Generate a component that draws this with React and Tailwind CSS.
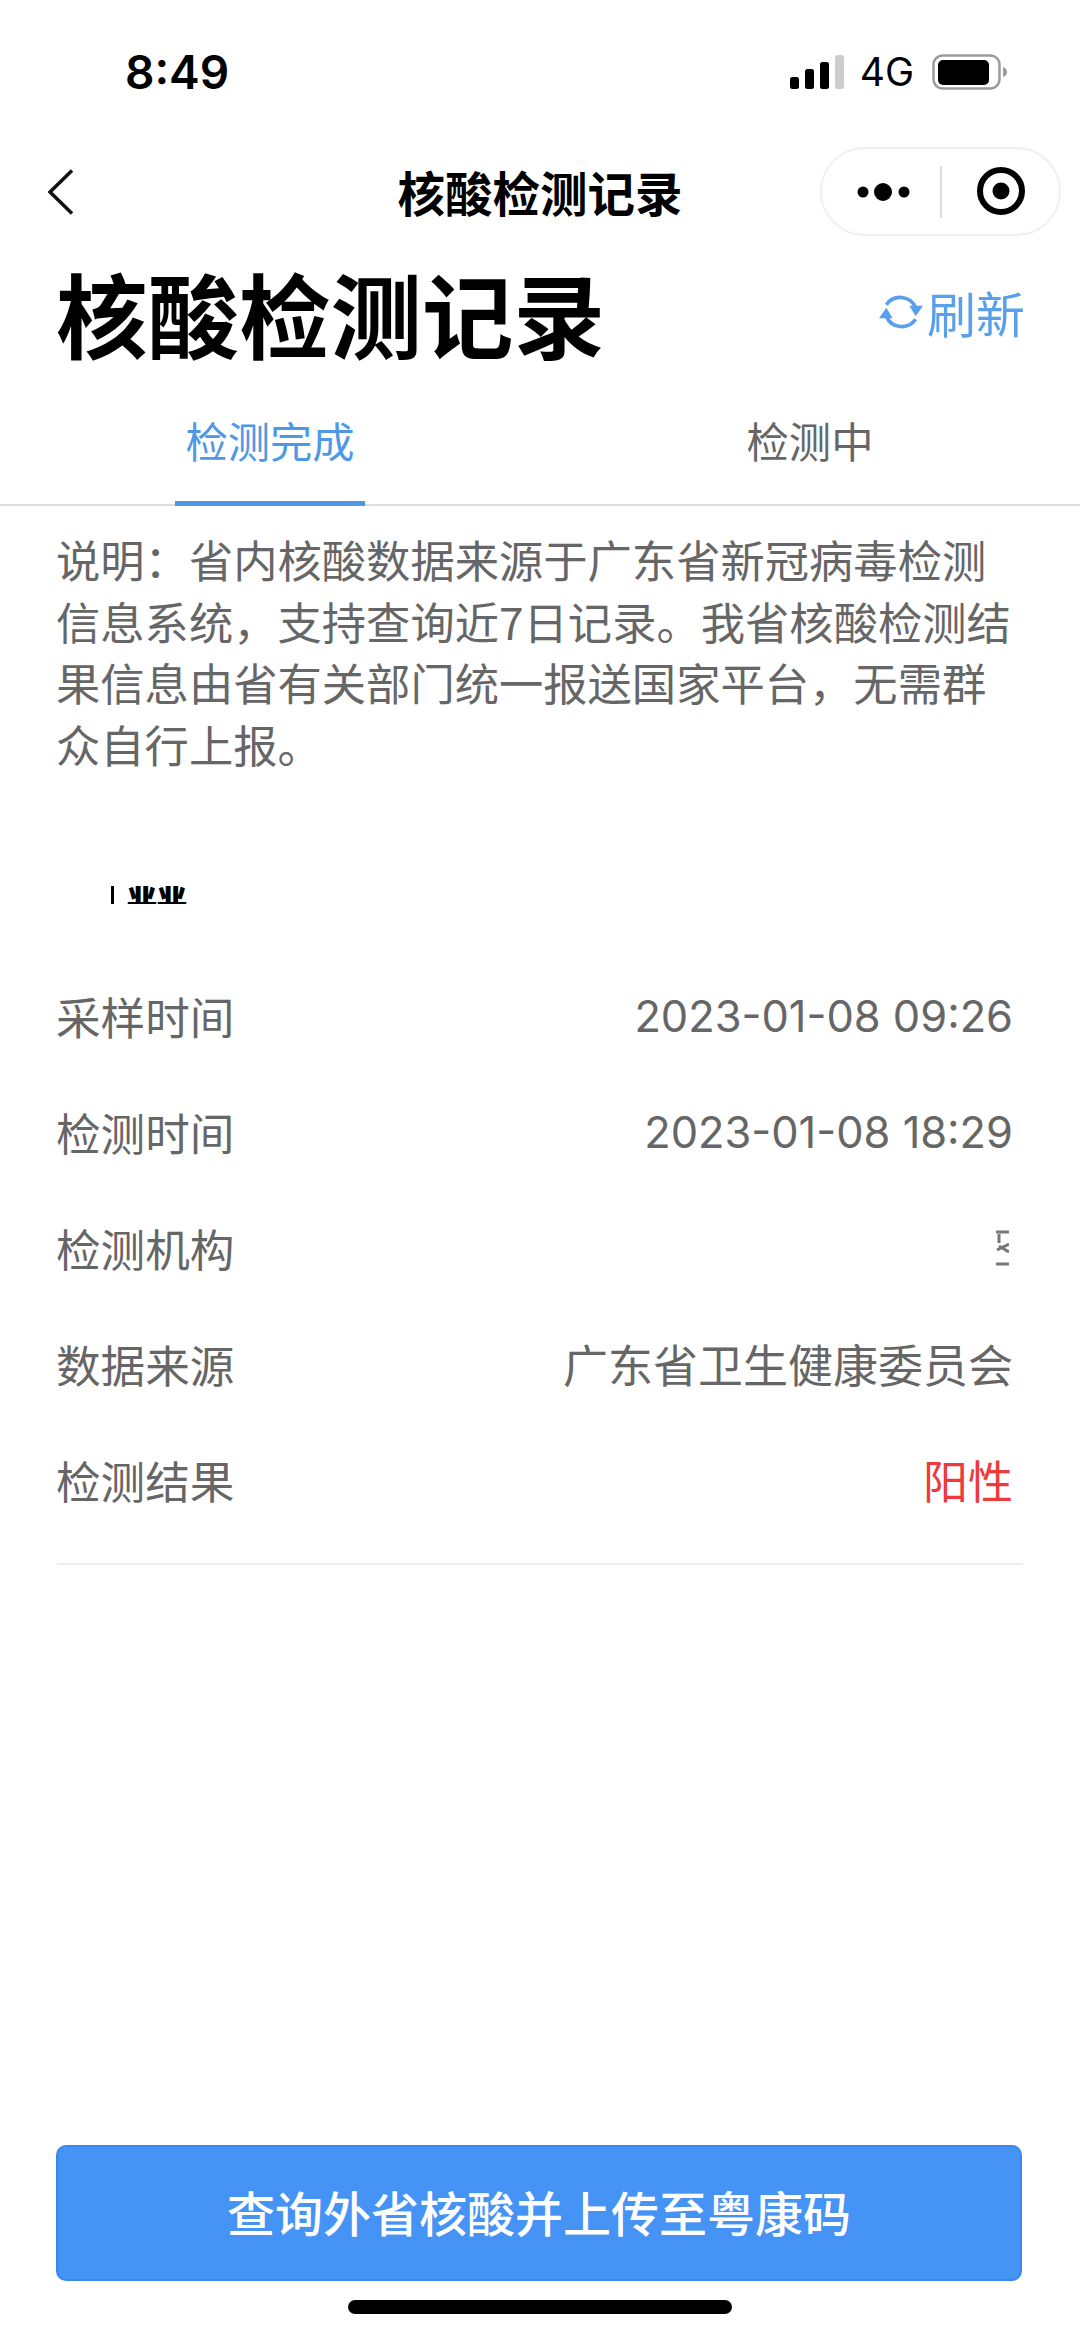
const CJK = '"Noto Sans CJK SC", sans-serif';

const rows = [
  { label: '采样时间', value: '2023-01-08 09:26' },
  { label: '检测时间', value: '2023-01-08 18:29' },
  { label: '检测机构', sliver: true },
  { label: '数据来源', value: '广东省卫生健康委员会', cjk: true },
  { label: '检测结果', value: '阳性', red: true, cjk: true },
];

const StatusBar = () => (
  <div className="flex h-[147px] shrink-0 items-start justify-between pl-[125px] pr-[72px] pt-[46px]">
    <span className="text-[46px] leading-[52px] font-semibold text-black" style={{ fontFamily: 'Inter, sans-serif' }}>
      8:49
    </span>
    <div className="flex items-center pt-[7px]">
      <svg width="56" height="36" viewBox="0 0 56 36" className="mr-[14px]">
        <rect x="0" y="23" width="9" height="12" rx="2.5" fill="#000" />
        <rect x="15" y="15" width="9" height="20" rx="2.5" fill="#000" />
        <rect x="30" y="8" width="9" height="27" rx="2.5" fill="#000" />
        <rect x="45" y="1" width="9" height="34" rx="2.5" fill="#ccc" />
      </svg>
      <span className="mr-[18px] text-[39px] leading-[38px] text-black" style={{ fontFamily: 'Inter, sans-serif' }}>
        4G
      </span>
      <svg width="76" height="36" viewBox="0 0 76 36">
        <rect x="1.5" y="1.5" width="66" height="33" rx="9" fill="none" stroke="#9a9a9a" strokeWidth="2.5" />
        <rect x="6" y="6" width="51" height="25" rx="5" fill="#000" />
        <path d="M71 13 C74 14 75 16 75 18 C75 20 74 22 71 23 Z" fill="#9a9a9a" />
      </svg>
    </div>
  </div>
);

const NavBar = () => (
  <div className="grid h-[87px] shrink-0 grid-cols-[212px_1fr_241px] items-center pl-[48px] pr-[19px]">
    <svg width="26" height="46" viewBox="0 0 26 46">
      <path d="M24 1.5 L2 23 L24 44.5" fill="none" stroke="#111" strokeWidth="3.5" />
    </svg>
    <span className="text-center text-[47.5px] leading-[60px] font-semibold text-black">核酸检测记录</span>
    <div className="flex h-[89px] w-[241px] items-center justify-self-end rounded-full border-2 border-[#f0f0f0] bg-white">
      <svg width="118" height="40" viewBox="0 0 118 40" className="shrink-0">
        <circle cx="41" cy="20" r="5.5" fill="#000" />
        <circle cx="61" cy="20" r="9" fill="#000" />
        <circle cx="82" cy="20" r="5.5" fill="#000" />
      </svg>
      <div className="h-[52px] w-[2px] shrink-0 bg-[#dcdcdc]" />
      <svg width="117" height="52" viewBox="0 0 117 52" className="shrink-0">
        <circle cx="59" cy="25" r="21" fill="none" stroke="#000" strokeWidth="6" />
        <circle cx="59" cy="25" r="8.5" fill="#000" />
      </svg>
    </div>
  </div>
);

const RefreshIcon = () => (
  <svg width="44" height="44" viewBox="0 0 42 42" className="shrink-0">
    <path d="M7 14 A16 16 0 0 1 35 17" fill="none" stroke="#5a9fec" strokeWidth="3.5" />
    <path d="M35 28 A16 16 0 0 1 7 25" fill="none" stroke="#5a9fec" strokeWidth="3.5" />
    <path d="M29 15 L42 15 L35 25 Z" fill="#5a9fec" />
    <path d="M0 27 L13 27 L7 17 Z" fill="#5a9fec" />
  </svg>
);

const Tabs = () => (
  <div className="grid h-[108px] shrink-0 grid-cols-2 border-b-2 border-[#dedede]">
    <div className="relative flex items-center justify-center pb-[22px] text-[42.3px] leading-[60px] text-[#4f98e6]">
      检测完成
      <div className="absolute bottom-[-2px] left-[175px] h-[5px] w-[190px] bg-[#4f98e6]" />
    </div>
    <div className="flex items-center justify-center pb-[22px] text-[42.3px] leading-[60px] text-[#666]">检测中</div>
  </div>
);

export default function App() {
  return (
    <div className="flex h-[2336px] w-[1080px] flex-col overflow-hidden bg-white" style={{ fontFamily: CJK }}>
      <StatusBar />
      <NavBar />

      <div className="flex h-[164px] shrink-0 items-center justify-between pb-[8px] pl-[56px] pr-[55px]">
        <h1 className="text-[91.5px] leading-[110px] font-bold text-black">核酸检测记录</h1>
        <div className="flex items-center text-[49px] leading-[60px] text-[#5a9fec]">
          <RefreshIcon />
          <span className="ml-[4px]">刷新</span>
        </div>
      </div>

      <Tabs />

      <p className="mt-[23px] shrink-0 pl-[56px] pr-[57px] text-[44.3px] leading-[61.5px] text-[#666]">
        说明：省内核酸数据来源于广东省新冠病毒检测信息系统，支持查询近7日记录。我省核酸检测结果信息由省有关部门统一报送国家平台，无需群众自行上报。
      </p>

      {/* 记录标题被遮挡，只剩一小条 */}
      <div className="mt-[111px] flex h-[18px] shrink-0 items-center pl-[111px]">
        <div className="h-[18px] w-[3px] bg-black" />
        <div className="ml-[13px] h-[18px] w-[60px] overflow-hidden">
          <div className="mt-[-13px] whitespace-nowrap text-[30px] leading-[36px] font-black text-black">亚亚</div>
        </div>
      </div>

      <div className="mt-[54px] flex shrink-0 flex-col pl-[56px] pr-[67px]">
        {rows.map((row) => (
          <div key={row.label} className="flex h-[116px] items-center justify-between text-[45px] leading-[60px] text-[#666]">
            <span className="text-[44.6px]">{row.label}</span>
            {row.sliver ? (
              <svg width="14" height="36" viewBox="0 0 14 36" className="mr-[4px]">
                <path d="M1 2 H14 M4 4 V13 M2 20 L14 14 M4 16 L14 22 M1 34 H14" fill="none" stroke="#777" strokeWidth="3" />
              </svg>
            ) : row.cjk ? (
              <span className={row.red ? 'text-[#ee3a3a]' : ''}>{row.value}</span>
            ) : (
              <span className="text-[43.4px]" style={{ fontFamily: 'Inter, sans-serif' }}>
                {row.value}
              </span>
            )}
          </div>
        ))}
      </div>

      <div className="mx-[57px] mt-[25px] h-[2px] shrink-0 bg-[#eeeeee]" />

      <button className="ml-[56px] mr-[58px] mt-auto flex h-[136px] shrink-0 items-center justify-center rounded-[10px] border-2 border-[#3a88ea] bg-[#4493f5] pb-[4px] text-[48px] font-medium text-white">
        查询外省核酸并上传至粤康码
      </button>

      <div className="mx-auto mb-[22px] mt-[19px] h-[14px] w-[384px] shrink-0 rounded-full bg-black" />
    </div>
  );
}
